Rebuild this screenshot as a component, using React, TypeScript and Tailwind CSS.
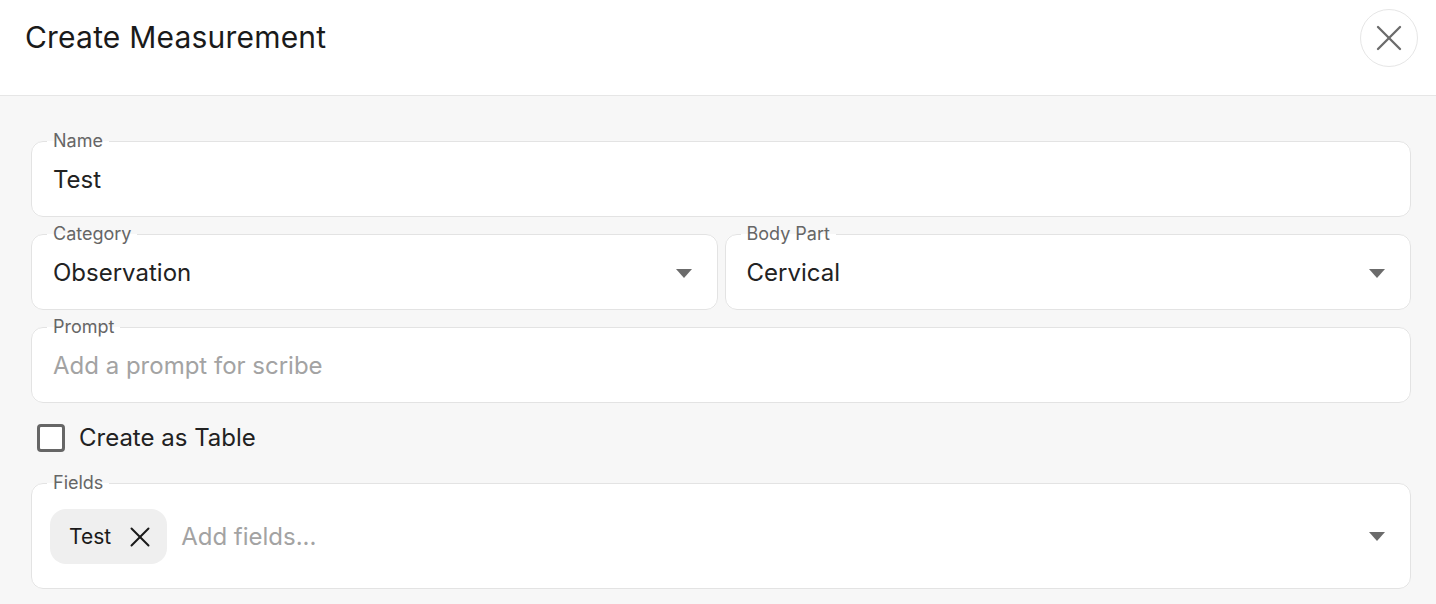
import { X } from 'lucide-react'

const font = { fontFamily: 'Inter, "Noto Sans", sans-serif' }

function Caret() {
  return (
    <svg width="16" height="9" viewBox="0 0 16 9" className="shrink-0">
      <path d="M0 0 L16 0 L8 9 Z" fill="#6b6b6b" />
    </svg>
  )
}

function Field({ label, children, className = '' }: { label: string; children: React.ReactNode; className?: string }) {
  return (
    <fieldset className={`min-w-0 border border-[#e3e3e3] rounded-xl bg-white pl-[21px] pr-[25px] ${className}`}>
      <legend className="px-[6px] -ml-[6px] text-[18px] leading-[20px] text-[#666666]">{label}</legend>
      {children}
    </fieldset>
  )
}

export default function App() {
  return (
    <div className="w-[1436px] h-[604px] bg-[#f7f7f7] overflow-hidden" style={font}>
      <div className="h-[96px] bg-white border-b border-[#e6e6e6] flex items-center justify-between pl-[25px] pr-[18px]">
        <h1 className="text-[30px] text-[#1a1a1a] tracking-[0.2px] -mt-[20px]">Create Measurement</h1>
        <button
          type="button"
          className="w-[58px] h-[58px] rounded-full border border-[#e6e6e6] flex items-center justify-center text-[#6b6b6b] -mt-[19px]"
        >
          <X size={44} strokeWidth={1.3} />
        </button>
      </div>

      <div className="pl-[31px] pr-[25px] pt-[35px] flex flex-col gap-[7px]">
        <Field label="Name" className="pt-[13px] pb-[20px]">
          <div className="text-[24px] leading-[32px] text-[#222222]">Test</div>
        </Field>

        <div className="grid grid-cols-2 gap-[7px]">
          <Field label="Category" className="pt-[13px] pb-[20px]">
            <div className="flex items-center justify-between">
              <span className="text-[24px] leading-[32px] text-[#222222]">Observation</span>
              <Caret />
            </div>
          </Field>
          <Field label="Body Part" className="pt-[13px] pb-[20px]">
            <div className="flex items-center justify-between">
              <span className="text-[24px] leading-[32px] text-[#222222]">Cervical</span>
              <Caret />
            </div>
          </Field>
        </div>

        <Field label="Prompt" className="pt-[13px] pb-[20px]">
          <div className="text-[24px] leading-[32px] text-[#a3a3a3]">Add a prompt for scribe</div>
        </Field>

        <label className="h-[56px] flex items-center gap-[14px] pl-[6px]">
          <span className="w-[28px] h-[28px] rounded-[4px] border-[3px] border-[#666666] bg-white" />
          <span className="text-[24px] text-[#222222]">Create as Table</span>
        </label>

        <Field label="Fields" className="pt-[16px] pb-[24px]">
          <div className="flex items-center">
            <span className="-ml-[3px] h-[55px] rounded-2xl bg-[#efefef] flex items-center pl-[19px] pr-[10px] gap-[12px]">
              <span className="text-[21px] text-[#1a1a1a]">Test</span>
              <X size={34} strokeWidth={1.4} className="text-[#1a1a1a]" />
            </span>
            <span className="ml-[14px] flex-1 text-[24px] text-[#a3a3a3]">Add fields...</span>
            <Caret />
          </div>
        </Field>
      </div>
    </div>
  )
}
